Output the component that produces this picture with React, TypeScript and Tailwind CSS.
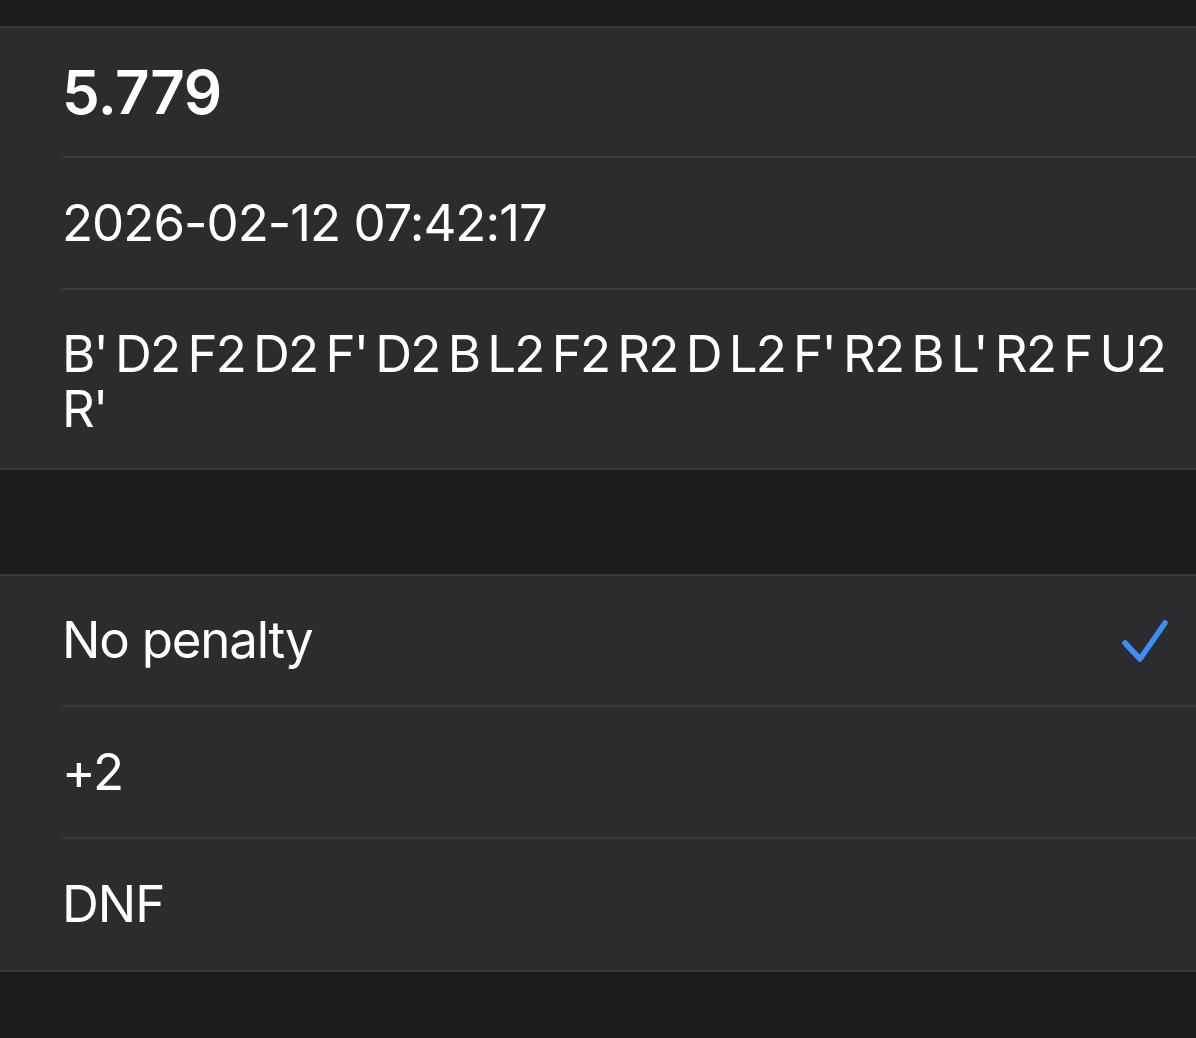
const font = { fontFamily: 'Inter, "Noto Sans", sans-serif' }

function Row({
  children,
  last = false,
  className = '',
}: {
  children: React.ReactNode
  last?: boolean
  className?: string
}) {
  return (
    <div className="pl-[62px]">
      <div
        className={`flex items-center pr-[27px] ${last ? '' : 'border-b-2 border-[#3a3a3c]'} ${className}`}
      >
        {children}
      </div>
    </div>
  )
}

function Checkmark() {
  return (
    <svg width="48" height="48" viewBox="0 0 48 48" fill="none">
      <path
        d="M4 26 19 42 44 6"
        stroke="#3b8ff6"
        strokeWidth="5.5"
        strokeLinecap="round"
        strokeLinejoin="round"
      />
    </svg>
  )
}

export default function App() {
  return (
    <div className="min-h-[1038px] w-[1196px] bg-[#1c1c1e] pt-[26px] text-white" style={font}>
      <div className="border-y-2 border-[#38383a] bg-[#2c2c2e]">
        <Row className="h-[130px]">
          <span className="text-[60px] font-semibold tracking-[-0.5px]">5.779</span>
        </Row>
        <Row className="h-[132px]">
          <span className="text-[51px] tracking-[-1px]">2026-02-12 07:42:17</span>
        </Row>
        <Row last className="pt-[36px] pb-[32px] !pr-[20px]">
          <span className="text-[51px] leading-[55px] tracking-[-1.8px] [word-spacing:-4.5px]">
            B' D2 F2 D2 F' D2 B L2 F2 R2 D L2 F' R2 B L' R2 F U2 R'
          </span>
        </Row>
      </div>

      <div className="h-[104px]" />

      <div className="border-y-2 border-[#38383a] bg-[#2c2c2e]">
        <Row className="h-[131px] justify-between">
          <span className="text-[51px] tracking-[-1.2px]">No penalty</span>
          <Checkmark />
        </Row>
        <Row className="h-[132px]">
          <span className="text-[51px] tracking-[-1px]">+2</span>
        </Row>
        <Row last className="h-[131px]">
          <span className="text-[51px] tracking-[-1px]">DNF</span>
        </Row>
      </div>
    </div>
  )
}
